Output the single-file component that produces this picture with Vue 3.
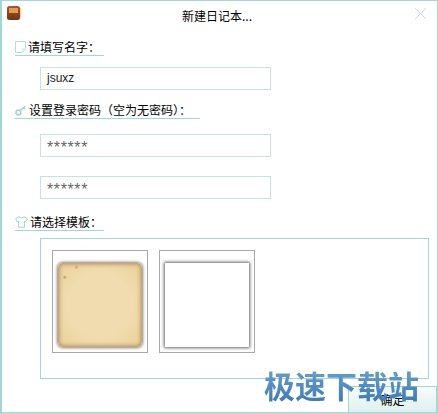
<script setup>
const sections = [
  { id: 'name', label: '请填写名字：', inputs: ['jsuxz'] },
  { id: 'pwd', label: '设置登录密码（空为无密码）：', inputs: ['******', '******'] },
]
</script>

<template>
  <div class="dialog">
    <header class="titlebar">
      <svg class="app-icon" width="16" height="16" viewBox="0 0 16 16">
        <defs>
          <linearGradient id="bookG" x1="0" y1="0" x2="0" y2="1">
            <stop offset="0" stop-color="#a5592c" />
            <stop offset="1" stop-color="#6e3519" />
          </linearGradient>
        </defs>
        <rect x="1" y="1" width="13" height="14" rx="2.5" fill="url(#bookG)" />
        <rect x="3" y="3" width="9" height="5" fill="#e09a5e" />
        <rect x="14" y="3" width="1.4" height="10" fill="#f3d78a" />
      </svg>
      <span class="title">新建日记本...</span>
      <svg class="close" width="13" height="13" viewBox="0 0 13 13">
        <path d="M1 1 12 12M12 1 1 12" stroke="#bfe0e0" stroke-width="1" fill="none" />
      </svg>
    </header>

    <section class="sec sec-name">
      <div class="label">
        <svg width="11" height="12" viewBox="0 0 11 12">
          <path d="M.5.5h10v7.5l-3 3.5h-7z" fill="#fff" stroke="#b5dcdc" />
          <path d="M7.5 11.5V8h3" fill="#e4f2f2" stroke="#cfe8e8" />
        </svg>
        <span>{{ sections[0].label }}</span>
      </div>
      <div class="field">{{ sections[0].inputs[0] }}</div>
    </section>

    <section class="sec sec-pwd">
      <div class="label label-wide">
        <svg width="12" height="11" viewBox="0 0 12 11">
          <circle cx="3.4" cy="7.4" r="2.4" fill="none" stroke="#a2d4d2" stroke-width="1.6" />
          <path d="M5 5.6 10.5 1M8.5 2.7l1.5 1.6" fill="none" stroke="#a2d4d2" stroke-width="1.4" />
        </svg>
        <span>{{ sections[1].label }}</span>
      </div>
      <div class="field pw">{{ sections[1].inputs[0] }}</div>
      <div class="field pw second">{{ sections[1].inputs[1] }}</div>
    </section>

    <section class="sec sec-tpl">
      <div class="label">
        <svg width="13" height="12" viewBox="0 0 13 12">
          <path d="M4 .7 .7 2.6l1.2 3 1.7-.5v6.2h5.8V5.1l1.7.5 1.2-3L9 .7C8 2.2 5 2.2 4 .7z" fill="#fff" stroke="#9fd3d1" />
        </svg>
        <span>请选择模板：</span>
      </div>
      <div class="panel">
        <div class="thumb"><div class="paper"></div></div>
        <div class="thumb"><div class="blank"></div></div>
      </div>
    </section>

    <footer class="footer">
      <button class="ok" type="button">确定</button>
    </footer>

    <div class="watermark">极速下载站</div>
  </div>
</template>

<style>
html, body { margin: 0; padding: 0; background: #fff; }
</style>

<style scoped>
.dialog {
  position: relative;
  box-sizing: border-box;
  width: 438px;
  height: 413px;
  overflow: hidden;
  background: #fff;
  border: 1px solid #a3d6d6;
  border-left-width: 2px;
  font-family: "Noto Sans CJK SC", sans-serif;
  font-size: 12px;
  color: #000;
}
.titlebar {
  position: relative;
  height: 30px;
  display: flex;
  align-items: center;
  justify-content: center;
}
.app-icon { position: absolute; left: 4px; top: 4px; }
.close { position: absolute; right: 10px; top: 6px; }
.title { margin-left: -5px; line-height: 28px; }
.sec { padding-left: 13px; }
.sec-name { padding-top: 8px; }
.sec-pwd { padding-top: 12px; }
.sec-tpl { padding-top: 15px; }
.label {
  display: flex;
  align-items: center;
  gap: 2px;
  box-sizing: border-box;
  width: 89px;
  height: 17px;
  border-bottom: 1px solid #a3d6d6;
  white-space: nowrap;
  line-height: 16px;
}
.label-wide { width: 185px; }
.field {
  box-sizing: border-box;
  width: 231px;
  height: 23px;
  margin: 11px 0 0 25px;
  padding-left: 6px;
  border: 1px solid #c5e3e3;
  line-height: 21px;
  font-family: "Liberation Sans", sans-serif;
  font-size: 12px;
  color: #222;
}
.pw {
  margin-top: 15px;
  font-size: 16px;
  letter-spacing: 0.6px;
  line-height: 25px;
  color: #666;
}
.pw.second { margin-top: 19px; }
.panel {
  box-sizing: border-box;
  display: flex;
  gap: 11px;
  width: 389px;
  height: 141px;
  margin: 7px 0 0 25px;
  padding: 11px;
  border: 1px solid #a3d6d6;
}
.thumb {
  box-sizing: border-box;
  width: 96px;
  height: 103px;
  padding: 12px 5px 0;
  border: 1px solid #a8a8a8;
}
.paper, .blank {
  width: 84px;
  height: 84px;
}
.paper {
  border-radius: 5px;
  background:
    radial-gradient(circle at 8% 17%, #c9a877 0 1px, transparent 2px),
    radial-gradient(circle at 22% 5%, #d4b681 0 1px, transparent 2px),
    radial-gradient(ellipse at center, #f0dcae 55%, #e8cf99 100%);
  box-shadow: inset 0 0 4px 1px rgba(150, 105, 60, 0.7), 0 0 3px 1px #8a7e74;
}
.blank {
  background: #fff;
  box-shadow: 0 0 3px 1px #666;
}
.footer {
  position: absolute;
  right: 0;
  bottom: 0;
}
.ok {
  display: block;
  box-sizing: border-box;
  width: 89px;
  height: 26px;
  padding: 0;
  border: 1px solid #a3d6d6;
  border-bottom: 0;
  background: linear-gradient(#f8fcfb, #dff0ee);
  font-family: "Noto Sans CJK SC", sans-serif;
  font-size: 12px;
  color: #000;
  line-height: 24px;
}
.watermark {
  position: absolute;
  left: 262px;
  top: 362px;
  font-family: "Noto Sans CJK SC", sans-serif;
  font-size: 31px;
  font-weight: 700;
  line-height: 44px;
  white-space: nowrap;
  background: linear-gradient(#6ea6cf, #3a76ae);
  -webkit-background-clip: text;
  background-clip: text;
  color: transparent;
}
</style>
